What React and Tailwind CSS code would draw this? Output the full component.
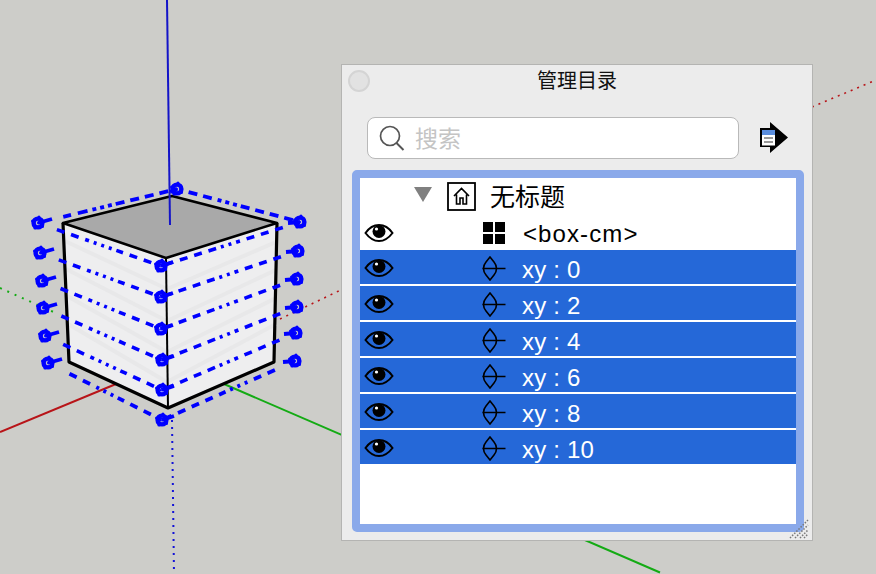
const levels = [
  { l: [38, 223], f: [161, 266], r: [300, 222] },
  { l: [40, 253], f: [161, 297], r: [298, 251] },
  { l: [42, 281], f: [161, 329], r: [297, 279] },
  { l: [43, 308], f: [162, 360], r: [297, 307] },
  { l: [45, 336], f: [162, 390], r: [296, 333] },
  { l: [48, 363], f: [162, 420], r: [295, 361] },
];
const DASH_L = "8 7 8 7 4 5 3 5 3 5 3 5 7 7 8 7 8 7 8 7 8 7";
const DASH_R = "8 7 8 7 8 7 4 5 3 5 3 5 8 7 8 7 8 7 8 7";

function Handle({ x, y, dx, dy }) {
  return (
    <g>
      <circle cx={x} cy={y} r="4.4" fill="none" stroke="#0000ff" strokeWidth="4.4" />
      <circle cx={x} cy={y} r="1.2" fill="#2020ff" />
      <circle cx={x - 3} cy={y + 5} r="1.6" fill="#0000ff" />
      <circle cx={x + 4.5} cy={y + 3.5} r="1.5" fill="#0000ff" />
      <circle cx={x + 1} cy={y - 6} r="1.5" fill="#0000ff" />
      <circle cx={x - 5.5} cy={y - 2} r="1.5" fill="#0000ff" />
      <line x1={x} y1={y} x2={x + dx} y2={y + dy} stroke="#0000ff" strokeWidth="3.8" />
    </g>
  );
}

function Scene() {
  return (
    <svg className="absolute inset-0 w-[876px] h-[574px]" viewBox="0 0 876 574">
      <line x1="0" y1="432" x2="116" y2="384" stroke="#b81418" strokeWidth="2" />
      <line x1="224" y1="384" x2="660" y2="572.500" stroke="#14ab14" strokeWidth="2" />
      <line x1="0" y1="288" x2="58" y2="314" stroke="#14ab14" strokeWidth="2" strokeDasharray="2 6" />
      <line x1="280" y1="319" x2="345" y2="288" stroke="#b81418" strokeWidth="1.6" strokeDasharray="2 5" />
      <line x1="812" y1="107" x2="876" y2="80" stroke="#b81418" strokeWidth="1.6" strokeDasharray="2 5" />
      <line x1="172" y1="420" x2="174" y2="574" stroke="#1212d8" strokeWidth="2" strokeDasharray="2 5" />

      <polygon points="172,196 277,223 166,258 63,223" fill="#a9a9a9" />
      <polygon points="63,223 166,258 168,408 69,362" fill="#eeeeef" />
      <polygon points="166,258 277,223 274,362 168,408" fill="#eeeeef" />
      {levels.slice(1, 5).map((v, i) => (
        <g key={i} stroke="#e8e8e9" strokeWidth="4" fill="none">
          <line x1={65 + i} y1={v.l[1] - 12} x2="167" y2={v.f[1] - 8} />
          <line x1="167" y1={v.f[1] - 8} x2="276" y2={v.r[1] - 9} />
        </g>
      ))}

      <g fill="none" stroke="#0000ff" strokeWidth="3.8">
        <line x1="38" y1="223" x2="177" y2="189" strokeDasharray="0 26 8 7 10 5 4 4 4 4 4 4 9 6 9 6 9 6 9 6 9 30" />
        <line x1="177" y1="189" x2="300" y2="222" strokeDasharray="0 12 9 6 9 6 4 4 4 4 4 4 9 6 9 6 9 6 9 30" />
        <line x1="48" y1="363" x2="162" y2="420" strokeDasharray="0 24 8 7 8 7 3 5 3 5 3 5 7 7 8 7 8 7 8 30" />
        <line x1="295" y1="361" x2="162" y2="420" strokeDasharray="0 22 8 7 8 7 3 5 3 5 3 5 7 7 8 7 8 7 8 7 8 30" />
      </g>

      <g fill="none" stroke="#000" strokeWidth="3.2" strokeLinejoin="round">
        <polygon points="172,196 277,223 166,258 63,223" strokeWidth="2.6" />
        <polyline points="63,223 69,362 168,408 274,362 277,223" />
        <line x1="166" y1="258" x2="168" y2="408" strokeWidth="2" />
      </g>

      <g fill="none" stroke="#0000ff" strokeWidth="3.6">
        {levels.slice(0, 5).map((v, i) => (
          <g key={i}>
            <line x1={v.l[0]} y1={v.l[1]} x2={v.f[0]} y2={v.f[1]} strokeDasharray={"0 20 " + DASH_L + " 0 40"} />
            <line x1={v.r[0]} y1={v.r[1]} x2={v.f[0]} y2={v.f[1]} strokeDasharray={"0 18 " + DASH_R + " 0 40"} />
          </g>
        ))}
      </g>
      <line x1="167" y1="0" x2="170" y2="225" stroke="#1414c8" strokeWidth="2" />

      {levels.map((v, i) => (
        <g key={i}>
          <Handle x={v.l[0]} y={v.l[1]} dx={14} dy={-4} />
          <Handle x={v.r[0]} y={v.r[1]} dx={-12} dy={1} />
          <Handle x={v.f[0]} y={v.f[1]} dx={12} dy={-4} />
        </g>
      ))}
      <Handle x={177} y={189} dx={-7} dy={3} />
    </svg>
  );
}

function Eye() {
  return (
    <svg width="30" height="22" viewBox="0 0 30 22" className="shrink-0">
      <path d="M1.5 11 C6 4.500 10.500 3 15 3 C19.500 3 24 4.500 28.500 11 C24 17 19.500 19 15 19 C10.500 19 6 17 1.500 11 Z" fill="none" stroke="#000" strokeWidth="2" />
      <circle cx="15" cy="9.500" r="6.500" fill="#000" />
      <circle cx="12.500" cy="7" r="1.600" fill="#fff" />
    </svg>
  );
}

function PlaneIcon() {
  return (
    <svg width="24" height="25" viewBox="0 0 24 25" className="shrink-0">
      <path d="M8 1 L4 6 Q1.500 9 1.500 12.500 Q1.500 16 4 19 L8 24 L12 19 Q14.500 16 14.500 12.500 Q14.500 9 12 6 Z" fill="none" stroke="#000" strokeWidth="1.600" />
      <path d="M0.500 12.500 H23.500" stroke="#000" strokeWidth="1.500" />
    </svg>
  );
}

function LayerRow({ label }) {
  return (
    <div className="h-[34px] flex items-center pl-[4px] pt-[2px] bg-[#2568d8] text-white shrink-0">
      <Eye />
      <div className="ml-[88px] w-[24px] flex justify-center"><PlaneIcon /></div>
      <span className="ml-[16px] mt-[4px] text-[24px] leading-none tracking-[0.2px]">{label}</span>
    </div>
  );
}

export default function App() {
  const font = { fontFamily: '"Liberation Sans", "Noto Sans CJK SC", sans-serif' };
  return (
    <div className="relative w-[876px] h-[574px] overflow-hidden bg-[#cdcdc9]" style={font}>
      <Scene />
      <div className="absolute left-[341px] top-[64px] w-[472px] h-[477px] bg-[#ececec] border border-[#b4b4b2] flex flex-col">
        <div className="relative h-[33px] flex items-center justify-center shrink-0">
          <div className="absolute left-[6px] top-[5px] w-[22px] h-[22px] rounded-full bg-[#e2e2e2] border-2 border-[#d4d4d4]" />
          <span className="text-[20px] leading-none text-[#111] -mt-[1px]">管理目录</span>
        </div>
        <div className="flex items-center mt-[19px] ml-[25px] shrink-0">
          <div className="w-[372px] h-[42px] rounded-[8px] bg-white border border-[#b9b9b9] flex items-center pl-[11px]">
            <svg width="26" height="26" viewBox="0 0 26 26" className="shrink-0">
              <circle cx="11" cy="11" r="9.500" fill="none" stroke="#555" strokeWidth="1.700" />
              <path d="M17.500 18 L24.500 25" stroke="#555" strokeWidth="2" />
            </svg>
            <span className="ml-[10px] mt-[2px] text-[23px] leading-none text-[#c4c4c4]">搜索</span>
          </div>
          <svg width="30" height="32" viewBox="0 0 30 32" className="ml-[21px] shrink-0">
            <path d="M0 6 H10 V0 L28 15.500 L10 31 V25 H0 Z" fill="#000" />
            <rect x="2" y="8" width="13" height="15.500" fill="#fff" />
            <rect x="2" y="8" width="13" height="5" fill="#5b8ede" />
            <rect x="4" y="15" width="9" height="2" fill="#999" />
            <rect x="4" y="19" width="9" height="2" fill="#999" />
          </svg>
        </div>
        <div className="mt-[11px] ml-[10px] w-[452px] h-[362px] border-[8px] border-[#8aa9ea] rounded-[5px] bg-white flex flex-col gap-[2px] shrink-0">
          <div className="h-[34px] flex items-center text-black shrink-0">
            <svg width="18" height="16" viewBox="0 0 18 16" className="ml-[54px] shrink-0">
              <path d="M0 0 H18 L9 15 Z" fill="#808080" />
            </svg>
            <svg width="29" height="29" viewBox="0 0 29 29" className="ml-[15px] mt-[2px] shrink-0">
              <rect x="1" y="1" width="27" height="27" fill="#fff" stroke="#000" strokeWidth="1.800" />
              <path d="M7 14 L14.500 6.500 L22 14 M9.500 12.500 V22 H13 V16 H16 V22 H19.500 V12.500" fill="none" stroke="#000" strokeWidth="1.600" />
            </svg>
            <span className="ml-[14px] mt-[4px] text-[25px] leading-none">无标题</span>
          </div>
          <div className="h-[34px] flex items-center pl-[4px] pt-[3px] text-black shrink-0">
            <Eye />
            <div className="ml-[88px] w-[24px] flex justify-center">
              <div className="grid grid-cols-2 gap-[2px] w-[22px] h-[22px]">
                <div className="bg-black" /><div className="bg-black" /><div className="bg-black" /><div className="bg-black" />
              </div>
            </div>
            <span className="ml-[17px] mt-[2px] text-[24px] leading-none tracking-[1.1px]">&lt;box-cm&gt;</span>
          </div>
          {[0, 2, 4, 6, 8, 10].map((n) => (
            <LayerRow key={n} label={"xy : " + n} />
          ))}
        </div>
        <svg width="20" height="20" viewBox="0 0 20 20" className="absolute right-[3px] bottom-[1px]">
          <path d="M1 19 L19 1 M6 19 L19 6 M11 19 L19 11 M15 19 L19 15" stroke="#777" strokeWidth="1.500" strokeDasharray="1.500 1.500" />
        </svg>
      </div>
    </div>
  );
}
